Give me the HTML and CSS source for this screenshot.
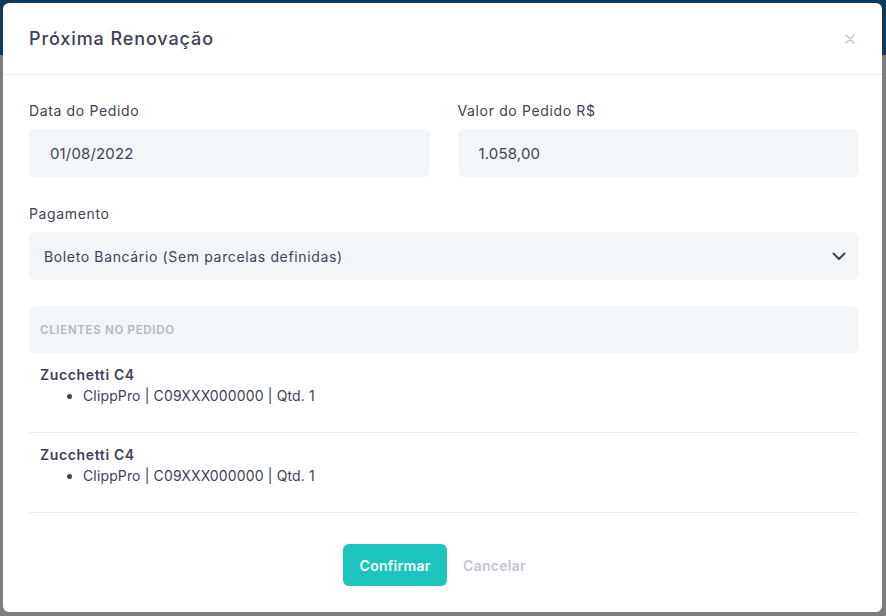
FILE: index.html
```html
<!DOCTYPE html>
<html lang="pt-BR">
<head>
  <meta charset="UTF-8" />
  <meta name="viewport" content="width=device-width, initial-scale=1" />
  <title>Próxima Renovação</title>
  <link rel="stylesheet" href="styles.css">
</head>
<body>

  <!-- Modal de renovação -->
  <div class="modal">
    <div class="modal-header">
      <h3>Próxima Renovação</h3>
      <span class="close-btn">
        <svg width="10" height="10" viewBox="0 0 10 10"><path d="M1 1L9 9M9 1L1 9" stroke="#c4c5d0" stroke-width="1.6" stroke-linecap="round"/></svg>
      </span>
    </div>

    <div class="modal-body">
      <div class="row field">
        <div>
          <label>Data do Pedido</label>
          <div class="input">01/08/2022</div>
        </div>
        <div>
          <label>Valor do Pedido R$</label>
          <div class="input">1.058,00</div>
        </div>
      </div>

      <div class="field">
        <label>Pagamento</label>
        <div class="select">
          <span>Boleto Bancário (Sem parcelas definidas)</span>
          <svg width="14" height="9" viewBox="0 0 14 9"><path d="M1.5 1.5L7 7L12.5 1.5" fill="none" stroke="#3f4254" stroke-width="2" stroke-linecap="round" stroke-linejoin="round"/></svg>
        </div>
      </div>

      <div class="clients-head">Clientes no pedido</div>

      <div class="client">
        <div class="client-name">Zucchetti C4</div>
        <ul>
          <li>ClippPro | C09XXX000000 | Qtd. 1</li>
        </ul>
      </div>
      <div class="client">
        <div class="client-name">Zucchetti C4</div>
        <ul>
          <li>ClippPro | C09XXX000000 | Qtd. 1</li>
        </ul>
      </div>
    </div>

    <div class="modal-footer">
      <button class="btn-confirm">Confirmar</button>
      <button class="btn-cancel">Cancelar</button>
    </div>
  </div>

</body>
</html>
```

FILE: styles.css
```css
/* Base */
html, body {
  margin: 0;
  padding: 0;
  height: 100%;
}
body {
  background: linear-gradient(#0d3a5e 0, #0d3a5e 55px, #7d7d7d 55px);
  font-family: Inter, "Noto Sans", sans-serif;
  letter-spacing: 0.04em;
  color: #3f4254;
  padding: 3px 4px 4px 3px;
  box-sizing: border-box;
  display: flex;
  overflow: hidden;
}

/* Modal */
.modal {
  flex: 1;
  background: #fff;
  border-radius: 6px;
  display: flex;
  flex-direction: column;
}
.modal-header {
  height: 71px;
  padding: 0 26px;
  border-bottom: 1px solid #ebedf3;
  display: flex;
  align-items: center;
  justify-content: space-between;
}
.modal-header h3 {
  margin: 0;
  font-size: 18px;
  font-weight: 500;
  letter-spacing: 0.05em;
  color: #3f4254;
}
.close-btn {
  display: flex;
  margin-right: 1px;
  margin-top: 1px;
}

.modal-body {
  padding: 25px 24px 0 26px;
}
.row {
  display: grid;
  grid-template-columns: 1fr 1fr;
  gap: 28px;
}
.field {
  margin-bottom: 26px;
}
.field label {
  display: block;
  font-size: 14px;
  line-height: 21px;
  margin-bottom: 8px;
  color: #3f4254;
}
.input,
.select {
  background: #f3f6f9;
  border-radius: 6px;
  height: 48px;
  box-sizing: border-box;
  display: flex;
  align-items: center;
  font-size: 14px;
  color: #3f4254;
}
.input {
  padding: 0 21px;
  font-size: 15px;
  letter-spacing: 0.01em;
}
.select {
  padding: 0 12px 0 15px;
  justify-content: space-between;
}

/* Clientes */
.clients-head {
  height: 47px;
  background: #f3f6f9;
  border-radius: 6px;
  padding: 0 11px;
  display: flex;
  align-items: center;
  text-transform: uppercase;
  font-size: 11.5px;
  font-weight: 600;
  letter-spacing: 0.06em;
  color: #b5b5c3;
}
.client {
  padding: 11px 11px 26px;
  border-bottom: 1px solid #ebedf3;
  font-size: 14px;
  line-height: 21px;
}
.client-name {
  font-weight: 600;
}
.client ul {
  margin: 0;
  padding-left: 43px;
}
.client li {
  font-size: 14px;
  letter-spacing: 0.01em;
}

/* Rodapé */
.modal-footer {
  display: flex;
  justify-content: center;
  align-items: center;
  padding: 31px 0 26px;
}
.modal-footer button {
  font-family: inherit;
  font-size: 14px;
  font-weight: 600;
  letter-spacing: 0.02em;
  border: none;
  cursor: pointer;
  height: 42px;
  border-radius: 6px;
}
.btn-confirm {
  background: #1bc5bd;
  color: #fff;
  width: 104px;
}
.btn-cancel {
  background: none;
  color: #c4c5d2;
  padding: 0 16px;
}
```
